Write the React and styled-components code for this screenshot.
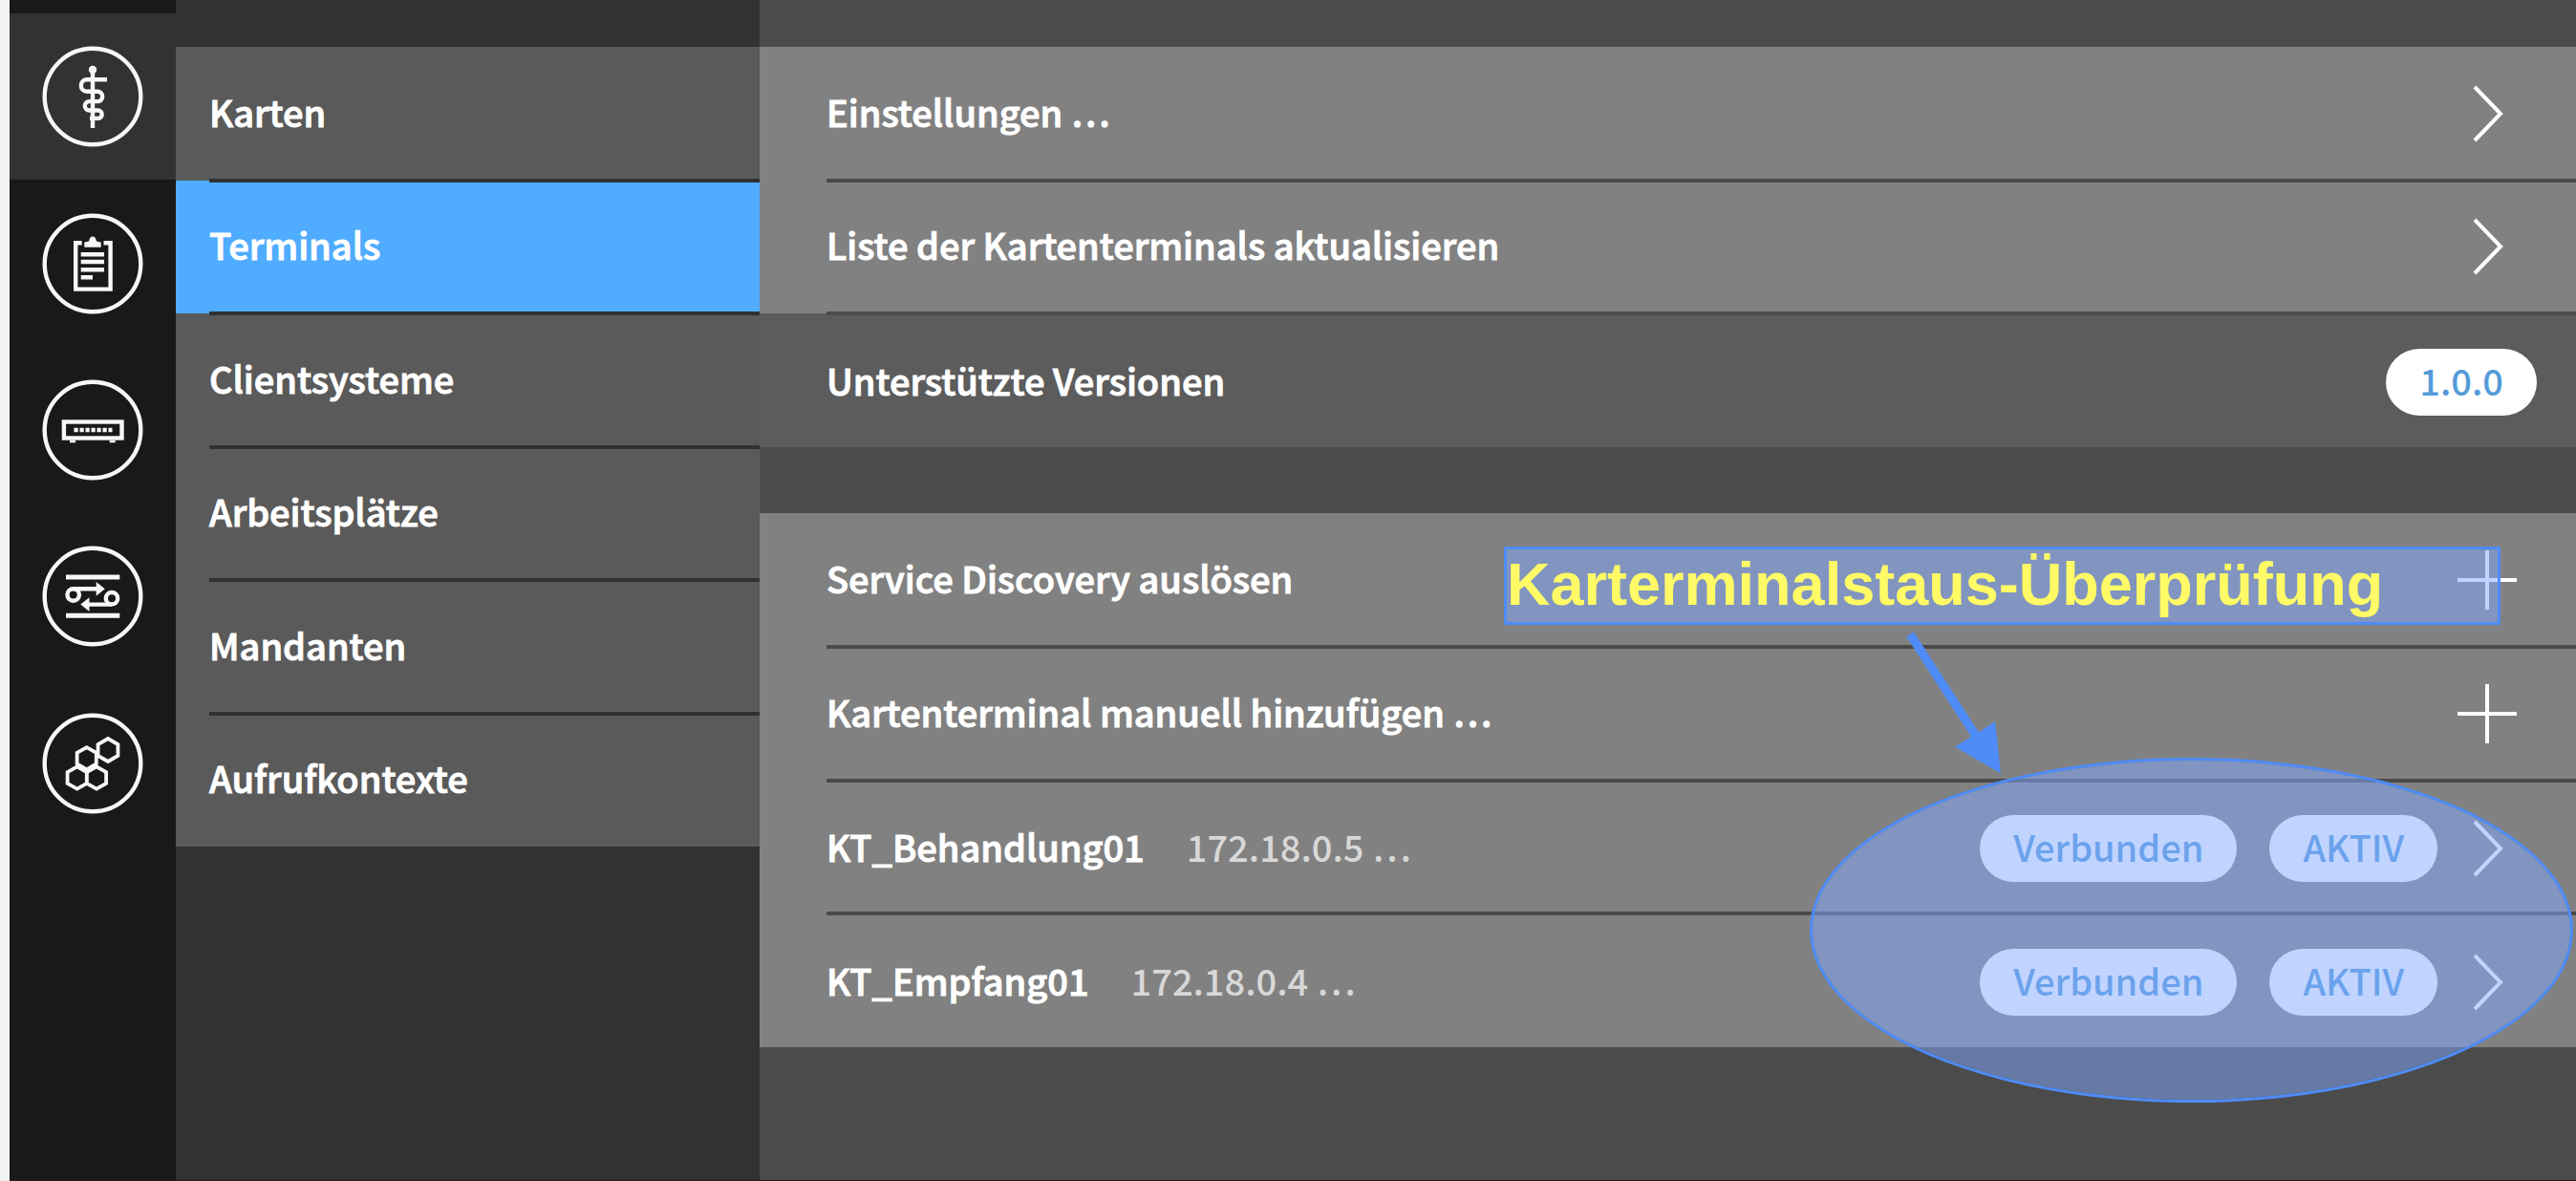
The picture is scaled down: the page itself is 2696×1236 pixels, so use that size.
import React from "react";
import styled, { createGlobalStyle } from "styled-components";

const GlobalStyle = createGlobalStyle`
  * { box-sizing: border-box; }
  body {
    margin: 0;
    background: #f2f2f2;
    color: #fff;
    font-family: "Noto Sans CJK SC", "Noto Sans", sans-serif;
    font-size: 38px;
    font-weight: 500;
    line-height: 56px;
  }
`;

const Shell = styled.div`
  display: flex;
  min-height: 100vh;
  margin-left: 10px;
  overflow: hidden;
  border-bottom: 1px solid #261f21;
  background: #4b4b4b;
`;

const Rail = styled.nav`
  flex: none;
  width: 174px;
  padding-top: 14px;
  background: #191919;
`;

const RailList = styled.div`
  display: grid;
  grid-auto-rows: 1fr;
  height: 872px;
`;

const RailButton = styled.button`
  display: grid;
  place-items: center;
  padding: 0;
  border: 0;
  color: #f7f7f7;
  background: ${(p) => (p.$active ? "#323232" : "transparent")};
  cursor: pointer;
`;

const Menu = styled.nav`
  flex: none;
  width: 611px;
  padding-top: 49px;
  background: #323232;
`;

const MenuList = styled.div`
  display: grid;
  grid-auto-rows: 1fr;
  height: 837px;
  background: #5a5a5a;
`;

const Divided = styled.div`
  position: relative;
  display: flex;
  align-items: center;
  color: inherit;

  &:not(:last-child)::after {
    content: "";
    position: absolute;
    z-index: 1;
    left: ${(p) => p.$inset};
    right: 0;
    bottom: -2px;
    height: 4px;
    background: ${(p) => p.$line};
  }
`;

const MenuItem = styled(Divided).attrs({ as: "a", $inset: "35px", $line: "#2f3133" })`
  padding: 0 35px;
  background: ${(p) => (p.$active ? "#4facff" : "transparent")};
  text-decoration: none;
`;

const Label = styled.span`
  padding-bottom: 4px;
  -webkit-text-stroke: 1px;
`;

const Content = styled.main`
  position: relative;
  flex: 1;
  display: flex;
  flex-direction: column;
  gap: 69px;
  min-width: 0;
  padding-top: 49px;
`;

const Group = styled.section`
  display: grid;
  grid-auto-rows: 1fr;
  height: ${(p) => p.$height};
`;

const Row = styled(Divided).attrs({ $inset: "70px", $line: "#4b4b4b" })`
  width: 100%;
  padding: ${(p) => (p.$tagged ? "4px" : "0")} ${(p) => (p.$plain ? "41px" : "62px")} 0 70px;
  border: 0;
  background: ${(p) => (p.$plain ? "#5c5c5c" : "#818181")};
  font: inherit;
  text-align: left;
`;

const Detail = styled.span`
  margin-left: 44px;
  color: #d8d8d8;
  -webkit-text-stroke: 0;
`;

const Trailing = styled.span`
  display: flex;
  align-items: center;
  gap: 34px;
  margin-left: auto;
`;

const Badge = styled.span`
  padding: 5px 35px 9px;
  border-radius: 35px;
  background: #fff;
  color: #559bd9;
`;

const RowIcon = styled.svg`
  display: block;
  width: 62px;
  height: 62px;
  margin-left: ${(p) => (p.$close ? "-13px" : "0")};
  fill: none;
  stroke: #fff;
  stroke-width: 4;
`;

const Note = styled.div`
  position: absolute;
  z-index: 2;
  top: 572px;
  right: 79px;
  width: 1043px;
  height: 82px;
  border: 3px solid #4f8cf7;
  background: rgba(130, 169, 255, 0.5);
  background-clip: padding-box;
  color: #fffa66;
  font: bold 63px/72px "Liberation Sans", Arial, sans-serif;
  white-space: nowrap;
`;

const Highlight = styled.div`
  position: absolute;
  z-index: 2;
  top: 793px;
  right: 3px;
  width: 799px;
  height: 361px;
  border: 3px solid #4f8cf7;
  border-radius: 50%;
  background: rgba(130, 169, 255, 0.5);
  background-clip: padding-box;
  pointer-events: none;
`;

const Arrow = styled.svg`
  position: absolute;
  z-index: 2;
  top: 660px;
  right: 596px;
  width: 110px;
  height: 150px;
  fill: #4f8cf7;
`;

const RoundIcon = ({ children }) => (
  <svg width="106" height="106" viewBox="0 0 106 106" fill="none" stroke="currentColor" strokeWidth="4.4" aria-hidden="true">
    <circle cx="53" cy="53" r="50.3" />
    {children}
  </svg>
);

const StaffIcon = () => (
  <RoundIcon>
    <path d="M53 24V86" />
    <circle cx="53" cy="25" r="4.2" fill="currentColor" stroke="none" />
    <path d="M68 35.3H47a6.2 6.2 0 0 0 0 12.4H58a5.2 5.2 0 0 1 0 10.4H49.5a4.7 4.7 0 0 0 0 9.4H58.5a4.2 4.2 0 0 1 0 8.4H50" />
  </RoundIcon>
);

const ClipboardIcon = () => (
  <RoundIcon>
    <path d="M41.7 31.2H35.2V79.6H71.6V31.2H64.5" />
    <path d="M44.3 35.7V30.5L49 29.5Q50 24.5 53 24.5T57 29.5L61.7 30.5V35.7Z" fill="currentColor" stroke="none" />
    <path d="M40.7 43.3H65M40.7 51H65M40.7 59.3H65M40.7 67.3H53" />
  </RoundIcon>
);

const RouterIcon = () => (
  <RoundIcon>
    <rect x="22.9" y="44.5" width="60.6" height="17" />
    <path d="M33.5 53H73.5" strokeDasharray="4.2 1.8" />
    <path d="M29 65H35M70.7 65H76.7" strokeWidth="2.4" />
  </RoundIcon>
);

const ExchangeIcon = () => (
  <RoundIcon>
    <path d="M25 33H81.3M25 73.2H81.3" strokeWidth="5" />
    <circle cx="32.7" cy="51.5" r="6.2" />
    <circle cx="73" cy="55.2" r="6.2" />
    <path d="M32.7 45.3H58M73 61.6H48" />
    <path d="M56.7 38L65.8 45.3L56.7 52.7ZM49.5 54.3L40.3 61.6L49.5 68.9Z" fill="currentColor" stroke="none" />
  </RoundIcon>
);

const hexagon = (cx, cy, r) => {
  const w = r * 0.87;
  return `M${cx} ${cy - r}l${w} ${r / 2}v${r}l${-w} ${r / 2}l${-w} ${-r / 2}v${-r}z`;
};

const HoneycombIcon = () => (
  <RoundIcon>
    <path
      strokeWidth="3.8"
      d={[hexagon(69, 39, 12), hexagon(46.7, 47.7, 11.6), hexagon(36.7, 68, 11.6), hexagon(57, 68, 11.6)].join("")}
    />
  </RoundIcon>
);

const Chevron = ({ close }) => (
  <RowIcon viewBox="0 0 62 62" $close={close} aria-hidden="true">
    <path d="M18 3L45 31L18 59" />
  </RowIcon>
);

const Plus = () => (
  <RowIcon viewBox="0 0 62 62" aria-hidden="true">
    <path d="M31 0V62M0 31H62" />
  </RowIcon>
);

const sections = [
  ["Praxis", StaffIcon],
  ["Protokolle", ClipboardIcon],
  ["Konnektor", RouterIcon],
  ["Netzwerk", ExchangeIcon],
  ["Module", HoneycombIcon],
];

const menu = ["Karten", "Terminals", "Clientsysteme", "Arbeitsplätze", "Mandanten", "Aufrufkontexte"];

const terminals = [
  { name: "KT_Behandlung01", ip: "172.18.0.5 …" },
  { name: "KT_Empfang01", ip: "172.18.0.4 …" },
];

const ActionRow = ({ label, icon }) => (
  <Row as="button" type="button">
    <Label>{label}</Label>
    <Trailing>{icon}</Trailing>
  </Row>
);

export default function App() {
  return (
    <>
      <GlobalStyle />
      <Shell lang="de">
        <Rail>
          <RailList>
            {sections.map(([label, Icon], i) => (
              <RailButton key={label} type="button" aria-label={label} $active={i === 0}>
                <Icon />
              </RailButton>
            ))}
          </RailList>
        </Rail>
        <Menu>
          <MenuList>
            {menu.map((label) => (
              <MenuItem key={label} href="#" $active={label === "Terminals"}>
                <Label>{label}</Label>
              </MenuItem>
            ))}
          </MenuList>
        </Menu>
        <Content>
          <Group $height="419px">
            <ActionRow label="Einstellungen …" icon={<Chevron />} />
            <ActionRow label="Liste der Kartenterminals aktualisieren" icon={<Chevron />} />
            <Row $plain $tagged>
              <Label>Unterstützte Versionen</Label>
              <Trailing>
                <Badge>1.0.0</Badge>
              </Trailing>
            </Row>
          </Group>
          <Group $height="559px">
            <ActionRow label="Service Discovery auslösen" icon={<Plus />} />
            <ActionRow label="Kartenterminal manuell hinzufügen …" icon={<Plus />} />
            {terminals.map(({ name, ip }) => (
              <Row key={name} as="button" type="button" $tagged>
                <Label>
                  {name}
                  <Detail>{ip}</Detail>
                </Label>
                <Trailing>
                  <Badge>Verbunden</Badge>
                  <Badge>AKTIV</Badge>
                  <Chevron close />
                </Trailing>
              </Row>
            ))}
          </Group>
          <Note>Karterminalstaus-Überprüfung</Note>
          <Arrow viewBox="0 0 110 150" aria-hidden="true">
            <path d="M5 6L13 1.5L81 106.5L98 95L104 149.5L56 121.5L73 111Z" />
          </Arrow>
          <Highlight />
        </Content>
      </Shell>
    </>
  );
}
